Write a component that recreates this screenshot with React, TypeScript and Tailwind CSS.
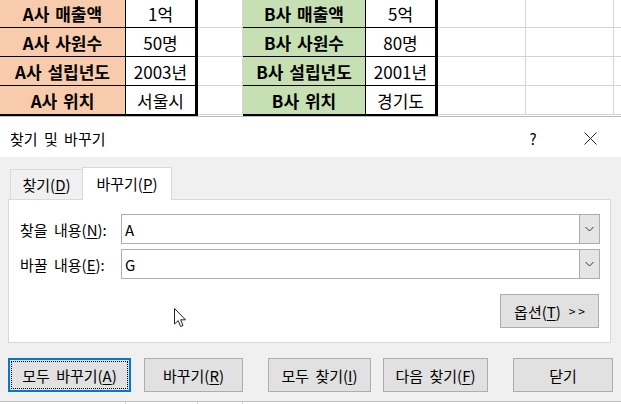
import React from 'react';

const font = { fontFamily: '"Noto Sans CJK KR", "Noto Sans", sans-serif' };

const aRows = [
  ['A사 매출액', '1억'],
  ['A사 사원수', '50명'],
  ['A사 설립년도', '2003년'],
  ['A사 위치', '서울시'],
];
const bRows = [
  ['B사 매출액', '5억'],
  ['B사 사원수', '80명'],
  ['B사 설립년도', '2001년'],
  ['B사 위치', '경기도'],
];

function Cell({ text, className }: { text?: string; className: string }) {
  return (
    <div className={`flex items-center justify-center leading-none ${className}`}>
      {text}
    </div>
  );
}

function LabelCol({ rows, fill, width }: { rows: string[][]; fill: string; width: string }) {
  return (
    <div className={`flex flex-col ${width}`}>
      {rows.map((r, i) => (
        <Cell
          key={i}
          text={r[0]}
          className={`${fill} border-r border-black text-[17px] font-bold [word-spacing:2px] ${
            i < 3 ? 'h-[29px] border-b' : 'h-[30px] border-b-2'
          }`}
        />
      ))}
    </div>
  );
}

function ValueCol({ rows }: { rows: string[][] }) {
  return (
    <div className="flex flex-col w-[72px]">
      {rows.map((r, i) => (
        <Cell
          key={i}
          text={r[1]}
          className={`bg-white border-r-[3px] border-black text-[17px] ${
            i < 3 ? 'h-[29px] border-b' : 'h-[30px] border-b-2'
          }`}
        />
      ))}
    </div>
  );
}

function EmptyCol({ width, last }: { width: string; last?: boolean }) {
  return (
    <div className={`flex flex-col ${width}`}>
      {[0, 1, 2, 3].map((i) => (
        <div
          key={i}
          className={`h-[29px] border-b border-[#d4d4d4] ${last ? '' : 'border-r'}`}
        />
      ))}
    </div>
  );
}

function U({ c }: { c: string }) {
  return <span className="underline underline-offset-2">{c}</span>;
}

function Btn({
  w,
  children,
  focused,
}: {
  w: string;
  children: React.ReactNode;
  focused?: boolean;
}) {
  if (focused) {
    return (
      <div className={`${w} h-[34px] border-2 border-[#0078d7] bg-[#e1e1e1] p-px`}>
        <div className="h-full w-full border border-dotted border-black flex items-center justify-center text-[15px] leading-none">
          {children}
        </div>
      </div>
    );
  }
  return (
    <div
      className={`${w} h-[34px] border border-[#adadad] bg-[#e1e1e1] flex items-center justify-center text-[15px] leading-none`}
    >
      {children}
    </div>
  );
}

function Combo({ label, value }: { label: React.ReactNode; value: string }) {
  return (
    <div className="flex items-center h-[30px]">
      <div className="w-[101px] text-[15px] leading-none">{label}</div>
      <div className="flex-1 h-full border border-[#adadad] bg-white flex">
        <div className="flex-1 flex items-center pl-[3px] text-[15px] leading-none">{value}</div>
        <div className="w-[20px] h-full bg-[#e5e5e5] border-l border-[#adadad] flex items-center justify-center">
          <svg width="9" height="6" viewBox="0 0 9 6">
            <path d="M0.5 1 L4.5 5 L8.5 1" stroke="#3a2a4a" strokeWidth="1" fill="none" />
          </svg>
        </div>
      </div>
    </div>
  );
}

export default function App() {
  return (
    <div className="w-[621px] h-[404px] overflow-hidden bg-white text-black flex flex-col" style={font}>
      {/* Sheet */}
      <div className="h-[119px] overflow-hidden flex flex-col">
        <div className="flex -mt-px">
          <LabelCol rows={aRows} fill="bg-[#f8cbad]" width="w-[126px]" />
          <ValueCol rows={aRows} />
          <EmptyCol width="w-[45px]" />
          <LabelCol rows={bRows} fill="bg-[#c6e0b4]" width="w-[123px]" />
          <ValueCol rows={bRows} />
          <EmptyCol width="w-[88px]" />
          <EmptyCol width="w-[88px]" />
          <div className="flex-1">
            <EmptyCol width="w-full" last />
          </div>
        </div>
        <div className="h-px bg-[#bdbdbd]" />
      </div>

      {/* Dialog */}
      <div className="flex flex-col h-[282px] [word-spacing:3px]">
        <div className="h-[38px] bg-white flex items-center">
          <div className="pl-[10px] text-[15px] leading-none flex-1">찾기 및 바꾸기</div>
          <div className="w-[20px] text-[15px] leading-none text-center mr-[41px]">?</div>
          <svg width="13" height="13" viewBox="0 0 13 13" className="mr-[24px]">
            <path d="M0.5 0.5 L12.5 12.5 M12.5 0.5 L0.5 12.5" stroke="#222" strokeWidth="1" />
          </svg>
        </div>

        <div className="flex-1 bg-[#f0f0f0] flex flex-col px-[8px] pt-[10px]">
          {/* tabs */}
          <div className="flex items-end h-[33px] mr-[2px]">
            <div className="w-[2px] h-full border-b border-[#d9d9d9]" />
            <div className="w-[72px] h-[31px] border-t border-l border-b border-[#d9d9d9] flex items-center justify-center text-[15px] leading-none">
              찾기(<U c="D" />)
            </div>
            <div className="w-[90px] h-[33px] bg-white border-t border-l border-r border-[#d9d9d9] flex items-center justify-center pb-[2px] text-[15px] leading-none">
              바꾸기(<U c="P" />)
            </div>
            <div className="flex-1 h-full border-b border-[#d9d9d9]" />
          </div>

          {/* panel */}
          <div className="bg-white border-l border-r border-b border-[#d9d9d9] mr-[2px] pt-[14px] pb-[14px] pl-[11px] pr-[10px] flex flex-col">
            <Combo label={<>찾을 내용(<U c="N" />):</>} value="A" />
            <div className="h-[5px]" />
            <Combo label={<>바꿀 내용(<U c="E" />):</>} value="G" />
            <div className="flex items-center justify-between mt-[15px]">
              <svg width="13" height="20" viewBox="0 0 13 20" className="ml-[154px] mt-[13px]">
                <path
                  d="M0.5 0.5 L0.5 16 L4.2 12.6 L6.6 18.5 L9 17.5 L6.7 11.8 L11.5 11.8 Z"
                  fill="white"
                  stroke="#2a1a3a"
                  strokeWidth="1"
                  strokeLinejoin="round"
                />
              </svg>
              <div className="w-[99px] h-[34px] mr-px border border-[#adadad] bg-[#e1e1e1] flex items-center justify-center text-[15px] leading-none">
                옵션(<U c="T" />)<span className="ml-[8px] text-[12px] [word-spacing:0px]">&gt; &gt;</span>
              </div>
            </div>
          </div>

          {/* buttons */}
          <div className="flex mt-[15px]">
            <Btn w="w-[123px]" focused>
              모두 바꾸기(<U c="A" />)
            </Btn>
            <div className="w-[13px]" />
            <Btn w="w-[99px]">
              바꾸기(<U c="R" />)
            </Btn>
            <div className="w-[25px]" />
            <Btn w="w-[103px]">
              모두 찾기(<U c="I" />)
            </Btn>
            <div className="w-[12px]" />
            <Btn w="w-[105px]">
              다음 찾기(<U c="F" />)
            </Btn>
            <div className="w-[25px]" />
            <Btn w="w-[100px]">닫기</Btn>
          </div>
        </div>
      </div>

      {/* sheet below dialog */}
      <div className="flex-1 border-t border-[#bdbdbd] bg-white flex">
        <div className="w-[126px] border-r border-[#d4d4d4]" />
        <div className="w-[72px] border-r border-[#d4d4d4]" />
        <div className="w-[45px] border-r border-[#d4d4d4]" />
      </div>
    </div>
  );
}
